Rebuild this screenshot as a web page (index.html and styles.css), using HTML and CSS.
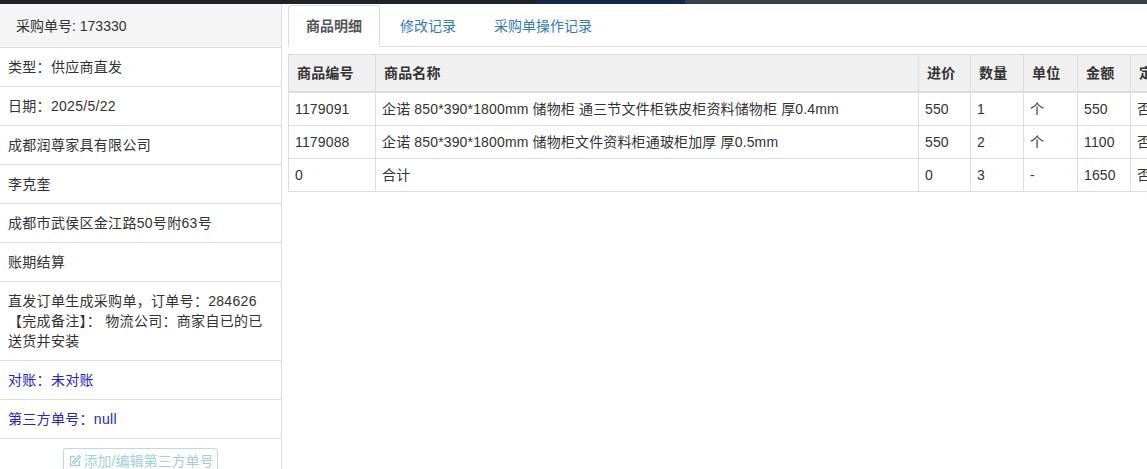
FILE: index.html
```html
<!DOCTYPE html>
<html>
<head>
    <title>采购单详情</title>
    <link rel="stylesheet" href="styles.css">
</head>
<body>
    <div class="topbar"></div>
    <div class="page">
        <div class="side">
            <div class="side-head">采购单号: 173330</div>
            <div class="side-row">类型：供应商直发</div>
            <div class="side-row">日期：2025/5/22</div>
            <div class="side-row">成都润尊家具有限公司</div>
            <div class="side-row">李克奎</div>
            <div class="side-row">成都市武侯区金江路50号附63号</div>
            <div class="side-row">账期结算</div>
            <div class="side-row">直发订单生成采购单，订单号：284626<br>【完成备注】： 物流公司：商家自已的已送货并安装</div>
            <div class="side-row blue">对账：未对账</div>
            <div class="side-row blue">第三方单号：null</div>
            <div class="side-btn-wrap">
                <button class="btn-third">
                    <svg width="14" height="14" viewBox="0 0 14 14" fill="none" stroke="currentColor" stroke-width="1.3">
                        <path d="M7 2.5H2.5v9h9V7"/>
                        <path d="M11 1.5l1.5 1.5-6 6H5V7.5z"/>
                    </svg>添加/编辑第三方单号
                </button>
            </div>
        </div>

        <div class="main">
            <ul class="tabs">
                <li class="tab active">商品明细</li>
                <li class="tab">修改记录</li>
                <li class="tab">采购单操作记录</li>
            </ul>

            <div class="table-wrap">
                <table class="goods">
                    <colgroup>
                        <col style="width:87px">
                        <col style="width:543px">
                        <col style="width:52px">
                        <col style="width:53px">
                        <col style="width:54px">
                        <col style="width:53px">
                        <col style="width:60px">
                        <col style="width:80px">
                    </colgroup>
                    <tr>
                        <th>商品编号</th>
                        <th>商品名称</th>
                        <th>进价</th>
                        <th>数量</th>
                        <th>单位</th>
                        <th>金额</th>
                        <th>定制</th>
                        <th>备注</th>
                    </tr>
                    <tr>
                        <td>1179091</td>
                        <td>企诺 850*390*1800mm 储物柜 通三节文件柜铁皮柜资料储物柜 厚0.4mm</td>
                        <td>550</td>
                        <td>1</td>
                        <td>个</td>
                        <td>550</td>
                        <td>否</td>
                        <td></td>
                    </tr>
                    <tr>
                        <td>1179088</td>
                        <td>企诺 850*390*1800mm 储物柜文件资料柜通玻柜加厚 厚0.5mm</td>
                        <td>550</td>
                        <td>2</td>
                        <td>个</td>
                        <td>1100</td>
                        <td>否</td>
                        <td></td>
                    </tr>
                    <tr>
                        <td>0</td>
                        <td>合计</td>
                        <td>0</td>
                        <td>3</td>
                        <td>-</td>
                        <td>1650</td>
                        <td>否</td>
                        <td></td>
                    </tr>
                </table>
            </div>
        </div>
    </div>
</body>
</html>
```

FILE: styles.css
```css
body {
    margin: 0;
    font-family: "Liberation Sans", "Noto Sans CJK SC", sans-serif;
    font-size: 14px;
    color: #333;
    background-color: #fff;
}

.topbar {
    height: 4px;
    background: linear-gradient(to right, #202428 0, #202428 535px, #16284a 535px, #16284a 685px, #37414c 685px);
}

.page {
    display: flex;
    height: 465px;
    overflow: hidden;
}

.side {
    width: 281px;
    flex-shrink: 0;
    border-right: 1px solid #ddd;
}

.side-head {
    background-color: #f5f5f5;
    padding: 12px 16px 11px;
    line-height: 20px;
    border-bottom: 1px solid #ddd;
}

.side-row {
    padding: 9px 8px;
    line-height: 20px;
    letter-spacing: 0.3px;
    border-bottom: 1px solid #ddd;
}

.side-row.blue {
    color: #2424c8;
}

.side-btn-wrap {
    text-align: center;
    padding-top: 9px;
}

.btn-third {
    font-family: inherit;
    font-size: 14px;
    color: #9fcfdd;
    background-color: #fff;
    border: 1px solid #b5dde8;
    border-radius: 3px;
    padding: 2px 4px;
    line-height: 20px;
    display: inline-flex;
    align-items: center;
    gap: 2px;
}

.main {
    flex: 1;
    min-width: 0;
    padding-left: 6px;
    overflow: hidden;
}

.tabs {
    list-style: none;
    margin: 1px 0 0 0;
    padding: 0;
    display: flex;
    border-bottom: 1px solid #ddd;
}

.tab {
    padding: 10px 17px;
    line-height: 20px;
    margin-right: 2px;
    margin-bottom: -1px;
    border: 1px solid transparent;
    border-radius: 4px 4px 0 0;
    color: #337ab7;
}

.tab.active {
    color: #555;
    font-weight: bold;
    background-color: #fff;
    border-color: #ddd #ddd transparent;
}

.table-wrap {
    margin-top: 7px;
    overflow: hidden;
}

.goods {
    border-collapse: collapse;
    table-layout: fixed;
    width: 982px;
}

.goods th,
.goods td {
    border: 1px solid #ddd;
    padding: 8px 6px;
    line-height: 16px;
    letter-spacing: 0.15px;
    text-align: left;
    white-space: nowrap;
    overflow: hidden;
}

.goods th {
    background-color: #f0f0f0;
    padding: 10px 8px;
    border-bottom: 2px solid #ddd;
}
```
